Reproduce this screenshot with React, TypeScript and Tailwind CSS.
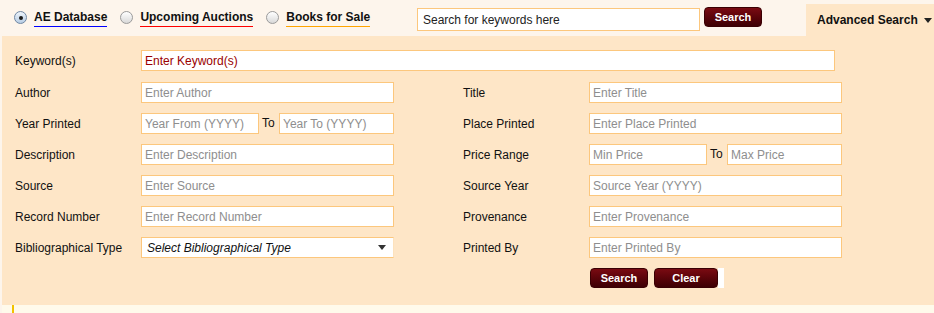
import React from 'react'

type Field =
  | { kind: 'text'; placeholder: string }
  | { kind: 'range'; from: string; to: string }
  | { kind: 'select'; text: string }

type Row = {
  left: [string, Field]
  right: [string, Field]
}

const rows: Row[] = [
  { left: ['Author', { kind: 'text', placeholder: 'Enter Author' }], right: ['Title', { kind: 'text', placeholder: 'Enter Title' }] },
  {
    left: ['Year Printed', { kind: 'range', from: 'Year From (YYYY)', to: 'Year To (YYYY)' }],
    right: ['Place Printed', { kind: 'text', placeholder: 'Enter Place Printed' }],
  },
  {
    left: ['Description', { kind: 'text', placeholder: 'Enter Description' }],
    right: ['Price Range', { kind: 'range', from: 'Min Price', to: 'Max Price' }],
  },
  { left: ['Source', { kind: 'text', placeholder: 'Enter Source' }], right: ['Source Year', { kind: 'text', placeholder: 'Source Year (YYYY)' }] },
  {
    left: ['Record Number', { kind: 'text', placeholder: 'Enter Record Number' }],
    right: ['Provenance', { kind: 'text', placeholder: 'Enter Provenance' }],
  },
  {
    left: ['Bibliographical Type', { kind: 'select', text: 'Select Bibliographical Type' }],
    right: ['Printed By', { kind: 'text', placeholder: 'Enter Printed By' }],
  },
]

const inputClass =
  'h-[21px] border border-[#fcc77d] bg-white px-[3px] text-[12px] text-[#222] outline-none placeholder:text-[#8e8e8e]'

function Radio({ checked }: { checked?: boolean }) {
  return (
    <span
      className={`mt-[1px] flex h-[13px] w-[13px] shrink-0 items-center justify-center rounded-full border ${
        checked
          ? 'border-[#6f87a3] bg-gradient-to-b from-[#eef4fb] to-[#b7cde4]'
          : 'border-[#9a9a9a] bg-gradient-to-b from-[#ffffff] to-[#d9d9d9]'
      }`}
    >
      {checked && <span className="h-[4px] w-[4px] rounded-full bg-[#1b1b1b]" />}
    </span>
  )
}

function Button({ label, width }: { label: string; width: string }) {
  return (
    <button
      className={`${width} h-[20px] rounded-[4px] border border-[#3a0003] bg-gradient-to-b from-[#7a0b12] to-[#3e0004] text-[11px] font-bold text-white`}
    >
      {label}
    </button>
  )
}

function FieldBox({ field }: { field: Field }) {
  if (field.kind === 'text') {
    return <input className={`${inputClass} w-[253px]`} placeholder={field.placeholder} />
  }
  if (field.kind === 'range') {
    return (
      <div className="flex w-[253px] items-center">
        <input className={`${inputClass} w-[118px]`} placeholder={field.from} />
        <span className="-mt-[2px] w-[20px] pl-[3px] text-[12px] text-[#111]">To</span>
        <input className={`${inputClass} w-[115px]`} placeholder={field.to} />
      </div>
    )
  }
  return (
    <div className="flex h-[21px] w-[253px] items-center justify-between border border-[#fcc77d] border-r-[#fde2bd] bg-white pl-[5px] pr-[7px]">
      <span className="text-[12px] italic text-[#111]">{field.text}</span>
      <svg width="8" height="5" viewBox="0 0 8 5">
        <path d="M0 0 H8 L4 5 Z" fill="#333" />
      </svg>
    </div>
  )
}

export default function App() {
  return (
    <div className="h-[313px] w-[934px] overflow-hidden bg-[#fdf5ec] font-['Liberation_Sans',Arial,sans-serif] text-[12px] text-[#111]">
      {/* Top bar */}
      <div className="flex h-[36px]">
        <div className="flex w-[417px] items-start pl-[14px] pt-[10px]">
          <div className="flex items-start">
            <Radio checked />
            <span className="ml-[7px] border-b border-[#0000ff] pb-[2px] font-bold leading-[14px]">AE Database</span>
          </div>
          <div className="ml-[13px] flex items-start">
            <Radio />
            <span className="ml-[7px] border-b border-[#ff0000] pb-[2px] font-bold leading-[14px]">Upcoming Auctions</span>
          </div>
          <div className="ml-[13px] flex items-start">
            <Radio />
            <span className="ml-[7px] border-b border-[#ffa500] pb-[2px] font-bold leading-[14px]">Books for Sale</span>
          </div>
        </div>
        <input
          className="mt-[8px] h-[23px] w-[283px] border border-[#fcc77d] bg-white pl-[5px] text-[12px] text-[#222] outline-none"
          defaultValue="Search for keywords here"
        />
        <div className="ml-[4px] mt-[7px]">
          <Button label="Search" width="w-[58px]" />
        </div>
        <div className="ml-[44px] mt-[4px] flex h-[32px] flex-1 items-center bg-[#fee6c7] pl-[11px]">
          <span className="font-bold">Advanced Search</span>
          <svg className="ml-[6px]" width="8" height="5" viewBox="0 0 8 5">
            <path d="M0 0 H8 L4 5 Z" fill="#222" />
          </svg>
        </div>
      </div>

      {/* Advanced search panel */}
      <div className="ml-[2px] h-[269px] bg-[#fee6c7] pl-[13px] pt-[14px]">
        <div className="flex h-[21px] items-center">
          <span className="w-[126px]">Keyword(s)</span>
          <input
            className={`${inputClass} w-[694px] placeholder:text-[#9a0000]`}
            placeholder="Enter Keyword(s)"
          />
        </div>
        <div className="mt-[11px] flex flex-col gap-[10px]">
          {rows.map(row => (
            <div key={row.left[0]} className="flex h-[21px] items-center">
              <span className="w-[126px]">{row.left[0]}</span>
              <FieldBox field={row.left[1]} />
              <span className="ml-[69px] w-[126px]">{row.right[0]}</span>
              <FieldBox field={row.right[1]} />
            </div>
          ))}
          <div className="flex items-center pl-[575px]">
            <Button label="Search" width="w-[58px]" />
            <div className="ml-[6px] flex">
              <Button label="Clear" width="w-[64px]" />
              <span className="h-[20px] w-[6px] bg-white" />
            </div>
          </div>
        </div>
      </div>

      {/* Bottom strip */}
      <div className="ml-[2px] h-[8px] bg-[#fffaeb] pl-[10px]">
        <div className="h-full w-[2px] bg-[#f2c200]" />
      </div>
    </div>
  )
}
